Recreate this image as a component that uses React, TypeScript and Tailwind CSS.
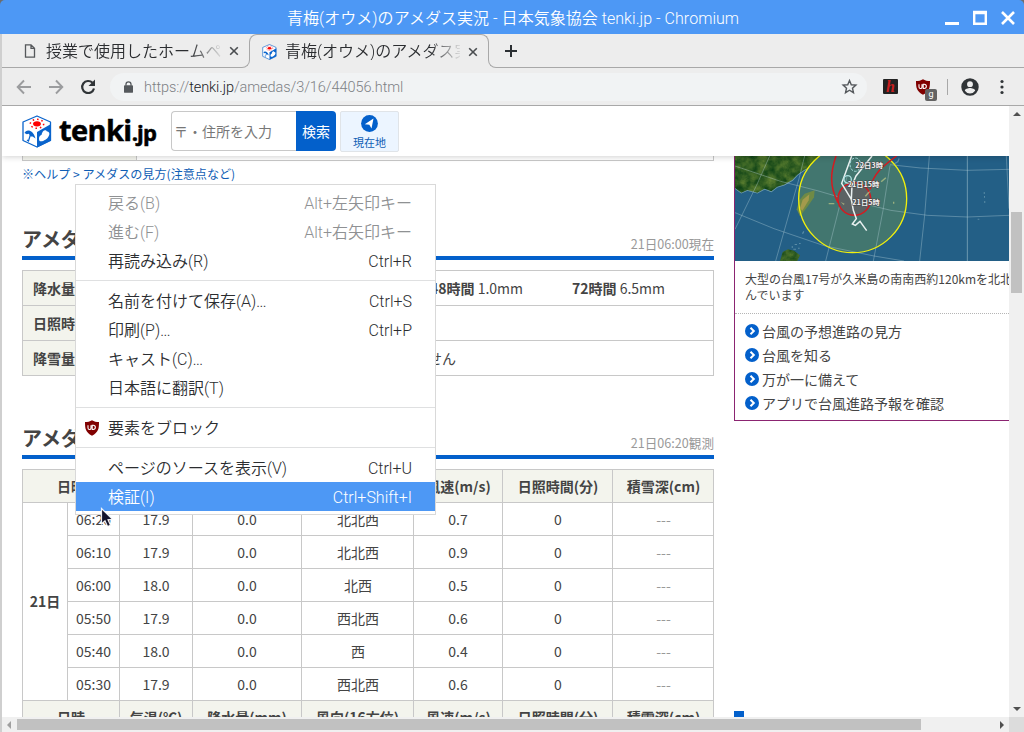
import React from "react";

const rows = [
  ["06:20", "17.9", "0.0", "北北西", "0.7", "0"],
  ["06:10", "17.9", "0.0", "北北西", "0.9", "0"],
  ["06:00", "18.0", "0.0", "北西", "0.5", "0"],
  ["05:50", "17.9", "0.0", "西北西", "0.6", "0"],
  ["05:40", "18.0", "0.0", "西", "0.4", "0"],
  ["05:30", "17.9", "0.0", "西北西", "0.6", "0"],
];

const headers = ["気温(℃)", "降水量(mm)", "風向(16方位)", "風速(m/s)", "日照時間(分)", "積雪深(cm)"];

const typhoonLinks = ["台風の予想進路の見方", "台風を知る", "万が一に備えて", "アプリで台風進路予報を確認"];

function TenkiCube({ className }: { className: string }) {
  return (
    <svg viewBox="0 0 30 33" className={className}>
      <path d="M15 1 L28.500 7 L28.500 25.500 L15 32 L1 25.500 L1 7 Z" fill="#fff" stroke="#0a64cc" strokeWidth="1.300" strokeLinejoin="round" />
      <path d="M15 17 L29 9 L29 25.500 L15 32.500 Z" fill="#0a64cc" />
      <path d="M17.500 26 C16 22 18.500 20 19.500 20 C20 16 23.500 13.500 25 16.500 C27.500 16.500 28 19 26.500 21.500 C25.500 24 20 27.500 17.500 26 Z" fill="#fff" />
      <ellipse cx="15" cy="8.800" rx="3.900" ry="2.600" fill="#f00" />
      <ellipse cx="15" cy="8.800" rx="6.700" ry="4.500" fill="none" stroke="#f00" strokeWidth="1.500" strokeDasharray="1.500 2.900" />
      <path d="M2.500 18 C4 14 11 14 13.500 23.500 L10.600 21.500 L8.500 21.500 L6.800 18.800 L4.800 19.200 Z" fill="#0a64cc" />
      <path d="M8.300 20 L6.500 26 L5 25" fill="none" stroke="#0a64cc" strokeWidth="1.200" />
    </svg>
  );
}

function Shield({ className }: { className: string }) {
  return (
    <svg viewBox="0 0 16 16" className={className}>
      <path d="M8 0.200 C6 1.600 3.500 2 1 2 C1 9 1.500 12 8 15.800 C14.500 12 15 9 15 2 C12.500 2 10 1.600 8 0.200 Z" fill="#800000" />
      <path d="M4 5.200 V8 a1.500 1.500 0 0 0 3 0 V5.200 M8.200 5.200 V9.500 h1 a2.100 2.100 0 0 0 0 -4.300 Z" fill="none" stroke="#fff" strokeWidth="1.100" />
    </svg>
  );
}

function Close() {
  return (
    <svg viewBox="0 0 10 10" className="size-[10px] shrink-0">
      <path d="M1.200 1.200 L8.800 8.800 M8.800 1.200 L1.200 8.800" stroke="#4a4d50" strokeWidth="1.600" />
    </svg>
  );
}

function TitleBar() {
  return (
    <div className="flex h-[34px] shrink-0 items-center rounded-t-[5px] bg-[#4d98f5] pl-[287px] text-[16px] text-white">
      <div className="w-[452px] whitespace-nowrap pt-[3px] tracking-[0.040px]">青梅(オウメ)のアメダス実況 - 日本気象協会 tenki.jp - Chromium</div>
      <svg viewBox="0 0 72 16" className="ml-[206px] h-4 w-[72px]">
        <path d="M0 14.500 H14" stroke="#fff" strokeWidth="3" />
        <path d="M29.200 4.500 V14.800 H40.800 V4.500" fill="none" stroke="#fff" strokeWidth="2.400" />
        <path d="M28 3.500 H42" stroke="#fff" strokeWidth="3.500" />
        <path d="M57 3 L69 15 M69 3 L57 15" stroke="#fff" strokeWidth="2.600" />
      </svg>
    </div>
  );
}

function TabStrip() {
  return (
    <div className="flex h-[34px] shrink-0 items-end bg-[#ededed] text-[16px] text-[#2b2d30]">
      <div className="flex h-[34px] w-[239px] items-center border-b border-[#a8a8a8] pl-[22px]">
        <svg viewBox="0 0 12 14" className="h-[14px] w-[12px] shrink-0">
          <path d="M1.500 0.800 H7 L10.500 4.300 V13.200 H1.500 Z M7 0.800 V4.300 H10.500" fill="none" stroke="#55585b" strokeWidth="1.300" />
        </svg>
        <div className="ml-[10px] w-[175px] overflow-hidden whitespace-nowrap pt-[2px] [mask-image:linear-gradient(to_right,black_145px,transparent_178px)]">授業で使用したホームページ</div>
        <div className="ml-[8px]"><Close /></div>
      </div>
      <div className="h-[9px] w-[9px] rounded-br-[8px] border-b border-r border-[#a8a8a8]" />
      <div className="-ml-px flex h-[34px] w-[240px] items-center self-start rounded-t-[8px] border-x border-t border-[#a8a8a8] pl-[12px] [clip-path:inset(0_0_8px_0)]">
        <TenkiCube className="h-[16px] w-[15px] shrink-0" />
        <div className="ml-[8px] w-[175px] overflow-hidden whitespace-nowrap [mask-image:linear-gradient(to_right,black_145px,transparent_178px)]">青梅(オウメ)のアメダス実況</div>
        <div className="ml-[8px]"><Close /></div>
      </div>
      <div className="-ml-px h-[9px] w-[9px] rounded-bl-[8px] border-b border-l border-[#a8a8a8]" />
      <div className="flex h-[34px] grow items-center border-b border-[#a8a8a8] pl-[8px]">
        <svg viewBox="0 0 12 12" className="size-3">
          <path d="M6 0 V12 M0 6 H12" stroke="#2b2f33" strokeWidth="2" />
        </svg>
      </div>
    </div>
  );
}

function Toolbar() {
  return (
    <div className="flex h-[38px] shrink-0 items-center border-b border-[#a8a8a8] bg-[#ededed]">
      <svg viewBox="0 0 80 18" className="ml-[14px] h-[18px] w-[80px] shrink-0">
        <path d="M15 9 H2 M8 2.500 L1.700 9 L8 15.500" fill="none" stroke="#9b9c9e" strokeWidth="1.900" />
        <path d="M33 9 H46 M40 2.500 L46.300 9 L40 15.500" fill="none" stroke="#9b9c9e" strokeWidth="1.900" />
        <path d="M76.500 4.800 A6 6 0 1 0 78 10.500" fill="none" stroke="#303437" strokeWidth="2.200" />
        <path d="M79 1.500 V8 H72.500 Z" fill="#303437" />
      </svg>
      <div className="ml-[14px] flex h-[28px] w-[757px] shrink-0 items-center rounded-full bg-[#f1f3f4] pl-[14px] pr-[9px]">
        <svg viewBox="0 0 10 13" className="h-[12px] w-[9px]">
          <path d="M2.200 5 V3.500 a2.800 2.800 0 0 1 5.600 0 V5" fill="none" stroke="#55595d" strokeWidth="1.400" />
          <rect x="0" y="4.500" width="10" height="8.500" rx="1" fill="#55595d" />
        </svg>
        <div className="ml-[11px] whitespace-nowrap pt-[2px] text-[14.500px] tracking-[-0.070px] text-[#7d8184]">https://<span className="text-[#202124]">tenki.jp</span>/amedas/3/16/44056.html</div>
        <svg viewBox="0 0 24 24" className="ml-auto size-[17px]">
          <path d="M12 3.500 L14.500 9.500 L21 10 L16.200 14.300 L17.600 20.700 L12 17.300 L6.400 20.700 L7.800 14.300 L3 10 L9.500 9.500 Z" fill="none" stroke="#55595d" strokeWidth="2" />
        </svg>
      </div>
      <div className="ml-[16px] flex size-[15px] shrink-0 items-center justify-center rounded-[1px] bg-[#222] font-['Liberation_Serif',serif] text-[16px] font-bold italic leading-none text-[#c81f1f]">h</div>
      <div className="relative ml-[17px] size-[16px] shrink-0">
        <Shield className="size-[16px]" />
        <span className="absolute left-[10px] top-[10px] flex h-[12px] w-[12px] items-center justify-center rounded-[2px] bg-[#636363] pb-px text-[9px] font-normal leading-none text-white">g</span>
      </div>
      <div className="ml-[16px] h-4 w-px bg-[#a8a8a8]" />
      <svg viewBox="0 0 24 24" className="ml-[11px] size-[22px] shrink-0">
        <path fill="#303437" d="M12 2.500a9.500 9.500 0 1 0 0 19 9.500 9.500 0 0 0 0-19zm0 3.200a3.200 3.200 0 1 1 0 6.400 3.200 3.200 0 0 1 0-6.400zm0 13.400a6.800 6.800 0 0 1-5.600-3c0-1.900 3.700-2.900 5.600-2.900s5.600 1 5.600 2.900a6.800 6.800 0 0 1-5.600 3z" />
      </svg>
      <svg viewBox="0 0 4 16" className="ml-[19px] h-4 w-1">
        <circle cx="2" cy="2.500" r="1.600" fill="#303437" />
        <circle cx="2" cy="8" r="1.600" fill="#303437" />
        <circle cx="2" cy="13.500" r="1.600" fill="#303437" />
      </svg>
    </div>
  );
}

function SiteHeader() {
  return (
    <div className="relative z-10 flex h-[50px] w-full shrink-0 bg-white pl-[20px] pt-[5px] shadow-[0_1px_6px_rgba(0,0,0,0.18)]">
      <TenkiCube className="mt-[4px] h-[33px] w-[30px] shrink-0" />
      <div className="ml-[7px] mt-[-1px] w-[98px] shrink-0 whitespace-nowrap font-['Open_Sans','Noto_Sans',sans-serif] text-[29px] font-bold leading-[40px] tracking-[-0.600px] text-black [-webkit-text-stroke:0.5px_black]">
        tenki<span className="text-[22px] tracking-[-0.800px]">.jp</span>
      </div>
      <div className="ml-[14px] flex h-[40px] w-[165px] shrink-0 text-[14px]">
        <div className="w-[125px] rounded-l-[4px] border border-r-0 border-[#c8c8c8] pl-[2px] leading-[39px] text-[#777]">〒・住所を入力</div>
        <div className="w-[40px] rounded-r-[4px] bg-[#0360cb] text-center leading-[41px] text-white">検索</div>
      </div>
      <div className="ml-[4px] flex h-[41px] w-[59px] shrink-0 flex-col items-center rounded-[2px] border border-[#e0e4e8] bg-[#ecf5ff] pt-[3px] text-[11px] text-[#0f5eb5]">
        <svg viewBox="0 0 17 17" className="size-[17px] shrink-0">
          <circle cx="8.500" cy="8.500" r="8.400" fill="#0360cb" />
          <path d="M12.500 3.500 L10.500 13.500 L8.300 9.800 L3.800 9.300 Z" fill="#fff" />
        </svg>
        <div className="mt-[2px] leading-[16px]">現在地</div>
      </div>
    </div>
  );
}

function Heading({ text, time }: { text: string; time: string }) {
  return (
    <div className="flex h-[38px] items-start justify-between border-b-4 border-[#0360cb]">
      <div className="text-[20px] font-bold leading-[34px]">{text}</div>
      <div className="pt-[6px] text-[12.600px] leading-[32px] text-[#999]">{time}</div>
    </div>
  );
}

function Summary() {
  return (
    <div className="mt-[10px] grid h-[106px] w-[692px] grid-cols-[114px_577px] grid-rows-3 border-l border-t border-[#c8c8c8] leading-[35px]">
      {["降水量", "日照時間", "降雪量"].map((label, i) => (
        <React.Fragment key={label}>
          <div className="border-b border-r border-[#c8c8c8] bg-[#f3f4ed] pl-[10px] font-bold">{label}</div>
          <div className="flex whitespace-nowrap border-b border-r border-[#c8c8c8]">
            {i === 0 && (
              <>
                <span className="ml-[293px] w-[142px]"><b>48時間</b> 1.0mm</span>
                <span><b>72時間</b> 6.5mm</span>
              </>
            )}
            {i === 2 && <span className="ml-[180px]">観測を行っていません</span>}
          </div>
        </React.Fragment>
      ))}
    </div>
  );
}

function HeaderCells() {
  return (
    <>
      <div className="col-span-2 border-b border-r border-[#c8c8c8] bg-[#f3f4ed] font-bold">日時</div>
      {headers.map((h, i) => (
        <div key={h} className={"border-b border-r border-[#c8c8c8] bg-[#f3f4ed] font-bold " + (i > 2 ? "pl-px" : "")}>{h}</div>
      ))}
    </>
  );
}

function Observations() {
  return (
    <div className="mt-[10px] grid w-[692px] auto-rows-[33px] grid-cols-[45px_52px_73px_109px_112px_89px_110px_101px] whitespace-nowrap border-l border-t border-[#c8c8c8] text-center leading-[32px]">
      <HeaderCells />
      <div className="row-span-6 border-b border-r border-[#c8c8c8] font-bold leading-[196px]">21日</div>
      {rows.map((r) => (
        <React.Fragment key={r[0]}>
          {r.map((c, i) => (
            <div key={i} className={"border-b border-r border-[#c8c8c8] " + (i === 3 || i === 5 ? "pl-px" : "")}>{c}</div>
          ))}
          <div className="border-b border-r border-[#c8c8c8] pl-px text-[#999]">---</div>
        </React.Fragment>
      ))}
      <HeaderCells />
    </div>
  );
}

function TyphoonMap() {
  return (
    <svg viewBox="3 12 822 315" className="block h-[105px] w-[274px]" preserveAspectRatio="none">
      <defs>
        <filter id="land" x="0" y="0" width="100%" height="100%" colorInterpolationFilters="sRGB">
          <feTurbulence type="fractalNoise" baseFrequency="0.04" numOctaves="4" seed="4" result="n" />
          <feColorMatrix in="n" type="matrix" values="0.45 0 0 0 -0.02  0.35 0 0 0 0.2  0.15 0 0 0 0.06  0 0 0 0 1" />
          <feComposite in2="SourceGraphic" operator="in" />
        </filter>
      </defs>
      <rect x="3" y="12" width="822" height="315" fill="#235f86" />
      <path d="M3 12 H286 L262 28 L238 40 L210 54 L190 68 L175 84 L150 98 L130 104 L112 118 L92 110 L70 122 L40 114 L22 122 L3 108 Z" fill="#2f6330" stroke="#6f9db3" strokeWidth="5" />
      <path d="M3 12 H286 L262 28 L238 40 L210 54 L190 68 L175 84 L150 98 L130 104 L112 118 L92 110 L70 122 L40 114 L22 122 L3 108 Z" fill="#2f6330" filter="url(#land)" />
      <path d="M138 327 L146 300 L162 292 L180 296 L198 310 L190 327 Z" fill="#2f6330" filter="url(#land)" />
      <circle cx="356" cy="140" r="162" fill="#42766f" />
      <path d="M242 115 L240 136 L222 162 L198 193 L188 172 L196 145 L212 125 Z" fill="#6f8a45" />
      <path d="M226 127 L224 145 L205 176 L198 168 L206 143 Z" fill="#a39a4c" />
      <g fill="none" stroke="#b8d4dc" strokeOpacity="0.500" strokeWidth="2.200">
        <path d="M107 12 L70 95 L3 232" />
        <path d="M212 12 L195 80 L125 327" />
        <path d="M3 42 L140 88 L250 116 L360 148 L470 175 L580 190 L700 195 L825 190" />
        <path d="M3 182 L120 230 L270 281 L420 312 L510 327" />
        <path d="M468 38 L560 48 L700 55 L825 52" />
        <path d="M340 70 L275 327" />
        <path d="M468 40 L447 175 L418 327" />
        <path d="M586 12 L572 190 L557 327" />
        <path d="M700 12 V327" strokeWidth="3" />
        <path d="M817 12 L825 170" />
      </g>
      <circle cx="361" cy="141" r="49" fill="#5b6263" />
      <circle cx="356" cy="140" r="162" fill="none" stroke="#f2f00c" strokeWidth="4" />
      <g fill="none" stroke="#d41b20" strokeWidth="4.500">
        <circle cx="361" cy="141" r="49" />
        <path d="M306 12 C290 60 285 100 312 152" />
        <path d="M488 12 C450 40 415 65 409 112" />
      </g>
      <g fill="none" stroke="#e9f0f0" strokeWidth="4.500">
        <path d="M353 12 L323 94 L352 142 L354 100 L366 72 L414 12" />
        <path d="M352 142 L358 175 L367 200 L355 216 L364 220 L378 208 L398 236" />
        <ellipse cx="364" cy="38" rx="16" ry="20" strokeDasharray="8 4" stroke="#a9e0df" strokeWidth="3" />
        <circle cx="341" cy="82" r="11" stroke="#a9e0df" strokeWidth="4" />
      </g>
      <g fill="#c7cf87" fillOpacity="0.650">
        <path d="M392 132 l10 -12 l8 -2 l-14 16 Z M412 102 l12 -8 l2 3 l-12 8 Z M440 88 l14 -12 l3 3 l-14 12 Z M284 153 h17 v4 h-17 Z M320 150 l12 5 l-3 4 Z M477 149 h4 v6 h-4 Z" />
      </g>
      <g fill="#8fb7c6" fillOpacity="0.500">
        <path d="M173 283 h4 v4 h-4 Z M182 276 h7 v3 h-7 Z M195 273 h5 v3 h-5 Z M178 290 h8 v3 h-8 Z M192 287 h5 v3 h-5 Z M204 244 l4 -7 l3 2 l-4 8 Z M749 121 h4 v4 h-4 Z M750 132 h3 v5 h-3 Z M750 148 h4 v4 h-4 Z M731 200 h5 v3 h-5 Z M480 34 l10 -6 l4 -10 l3 2 l-4 11 l-11 6 Z" />
      </g>
      <g fill="#f4f4f4" stroke="#444" strokeWidth="3" paintOrder="stroke" fontSize="21" fontWeight="700">
        <text x="364" y="47" textLength="83" lengthAdjust="spacingAndGlyphs">22日3時</text>
        <text x="341" y="104" textLength="95" lengthAdjust="spacingAndGlyphs">21日15時</text>
        <text x="355" y="160" textLength="82" lengthAdjust="spacingAndGlyphs">21日5時</text>
      </g>
    </svg>
  );
}

function TyphoonPanel() {
  return (
    <div className="h-[265px] w-[275px] shrink-0 border-b border-l border-[#8b2471] bg-white">
      <TyphoonMap />
      <div className="h-[53px] overflow-hidden whitespace-nowrap border-b border-dotted border-[#b5b5b5] pl-[10px] pt-[10px] text-[12px] leading-[16px]">
        大型の台風17号が久米島の南南西約120kmを北北西に進<br />んでいます
      </div>
      <div className="flex flex-col pl-[10px] pt-[5px]">
        {typhoonLinks.map((t) => (
          <div key={t} className="flex h-[24px] items-center whitespace-nowrap text-[14px]">
            <svg viewBox="0 0 14 14" className="mr-[3px] size-[14px]">
              <circle cx="7" cy="7" r="7" fill="#0360cb" />
              <path d="M5.500 3.800 L8.800 7 L5.500 10.200" fill="none" stroke="#fff" strokeWidth="2" />
            </svg>
            {t}
          </div>
        ))}
      </div>
    </div>
  );
}

function VerticalScrollbar() {
  return (
    <div className="flex w-[15px] shrink-0 flex-col items-center bg-[#f0f0f0]">
      <svg viewBox="0 0 8 4" className="mt-[6px] h-[4px] w-[8px]"><path d="M4 0 L8 4 H0 Z" fill="#505050" /></svg>
      <div className="mt-[96px] h-[81px] w-[11px] bg-[#c1c1c1]" />
      <svg viewBox="0 0 8 4" className="mb-[6px] mt-auto h-[4px] w-[8px]"><path d="M4 4 L8 0 H0 Z" fill="#505050" /></svg>
    </div>
  );
}

function HorizontalScrollbar() {
  return (
    <div className="flex h-[15px] shrink-0 items-center bg-[#f0f0f0]">
      <svg viewBox="0 0 4 8" className="ml-[5px] h-[8px] w-[4px]"><path d="M0 4 L4 0 V8 Z" fill="#a0a0a0" /></svg>
      <div className="ml-[6px] h-[11px] w-[904px] bg-[#c1c1c1]" />
      <svg viewBox="0 0 4 8" className="ml-auto mr-[5px] h-[8px] w-[4px]"><path d="M4 4 L0 0 V8 Z" fill="#505050" /></svg>
      <div className="h-[15px] w-[15px] bg-[#dcdcdc]" />
    </div>
  );
}

function Item({ label, keys, tone = "text-[#2b2d30]", icon }: { label: string; keys?: string; tone?: string; icon?: boolean }) {
  return (
    <div className={"flex h-[29px] items-center justify-between pr-[23px] " + tone}>
      <div className="flex items-center">
        <div className="w-[32px] pl-[8px]">{icon && <Shield className="size-[16px]" />}</div>
        <div className="pt-[2px]">{label.replace("...", "")}{label.endsWith("...") && <span className="tracking-[-0.600px]">...</span>}</div>
      </div>
      <div className="pt-[2px]">{keys}</div>
    </div>
  );
}

function Divider() {
  return <div className="my-[5px] h-px bg-[#dfe0e1]" />;
}

function ContextMenu() {
  return (
    <div className="absolute left-[75px] top-[184px] z-20 w-[361px] whitespace-nowrap border border-[#d9d9d9] bg-white py-[3px] text-[16px]">
      <Item label="戻る(B)" keys="Alt+左矢印キー" tone="text-[#8f9193]" />
      <Item label="進む(F)" keys="Alt+右矢印キー" tone="text-[#8f9193]" />
      <Item label="再読み込み(R)" keys="Ctrl+R" />
      <Divider />
      <Item label="名前を付けて保存(A)..." keys="Ctrl+S" />
      <Item label="印刷(P)..." keys="Ctrl+P" />
      <Item label="キャスト(C)..." />
      <Item label="日本語に翻訳(T)" />
      <Divider />
      <Item label="要素をブロック" icon />
      <Divider />
      <Item label="ページのソースを表示(V)" keys="Ctrl+U" />
      <Item label="検証(I)" keys="Ctrl+Shift+I" tone="bg-[#4d98f5] text-white" />
    </div>
  );
}

function Cursor() {
  return (
    <svg viewBox="0 0 16 22" className="absolute left-[100px] top-[507px] z-30 h-[22px] w-[16px]">
      <path d="M1.500 1.500 V17 L5 13.800 L7.500 19.500 L10.500 18.200 L8 12.800 L12.500 12.300 Z" fill="#14142c" stroke="#fff" strokeWidth="1.200" strokeOpacity="0.900" />
    </svg>
  );
}

export default function App() {
  return (
    <div className="relative flex h-[732px] w-[1024px] flex-col overflow-hidden bg-[#6d6d6d] font-['Roboto','Noto_Sans_CJK_JP',sans-serif] font-[350]">
      <TitleBar />
      <div className="flex min-h-0 grow flex-col border-l-2 border-[#cfcfcf]">
        <TabStrip />
        <Toolbar />
        <div className="flex h-[611px] shrink-0">
          <div className="flex w-[1007px] flex-col overflow-hidden bg-white font-['Noto_Sans_CJK_JP',sans-serif] text-[14px] font-normal text-[#444]">
            <SiteHeader />
            <div className="flex min-h-0 grow pl-[20px]">
              <div className="w-[692px] shrink-0">
                <div className="flex h-[5px] border-x border-b border-[#c8c8c8]">
                  <div className="w-[114px] border-r border-[#c8c8c8] bg-[#f3f4ed]" />
                </div>
                <div className="mb-[36px] h-[25px] text-[12.100px] leading-[26px] text-[#0f5eb5]">※ヘルプ &gt; アメダスの見方(注意点など)</div>
                <Heading text="アメダス実況 積算値" time="21日06:00現在" />
                <Summary />
                <div className="h-[45px]" />
                <Heading text="アメダス実況 10分値" time="21日06:20観測" />
                <Observations />
              </div>
              <div className="ml-[20px] flex flex-col">
                <TyphoonPanel />
                <div className="mt-[290px] h-[10px] w-[10px] shrink-0 bg-[#0360cb]" />
              </div>
            </div>
          </div>
          <VerticalScrollbar />
        </div>
        <HorizontalScrollbar />
      </div>
      <ContextMenu />
      <Cursor />
    </div>
  );
}
